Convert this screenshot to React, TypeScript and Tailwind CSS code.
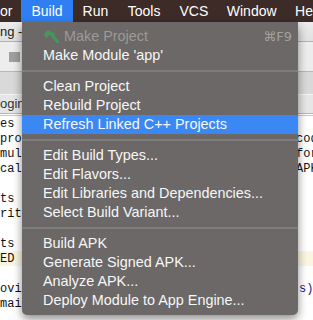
import React from "react";

const sans = { fontFamily: '"Liberation Sans", Arial, sans-serif' };
const mono = { fontFamily: '"Liberation Mono", "DejaVu Sans Mono", monospace' };

type Row = { l: string; r?: string; rs?: number; hl?: boolean };

const rows: Row[] = [
  { l: "es a" },
  { l: "prov", r: "cod" },
  { l: "mult", r: "for" },
  { l: "cal", r: "APK" },
  { l: "" },
  { l: "ts f" },
  { l: "rity" },
  { l: "" },
  { l: "ts f" },
  { l: "ED", hl: true },
  { l: "" },
  { l: "ovid", r: "s)", rs: 1 },
  { l: "main" },
  { l: "" },
];

function Hammer() {
  return (
    <svg width="16" height="14" viewBox="0 0 16 14" className="shrink-0">
      <path d="M0.5 5.5 L4.5 1 L12 4.5 L10.5 7.5 L6.5 5.8 L3.5 9 Z" fill="#45975a" />
      <path d="M9.2 6.2 L14.8 13" stroke="#45975a" strokeWidth="3" strokeLinecap="round" />
    </svg>
  );
}

function Item({ label, hl, disabled, icon, shortcut }: { label: string; hl?: boolean; disabled?: boolean; icon?: boolean; shortcut?: string }) {
  return (
    <div
      className={`flex h-[19px] items-center pl-[21px] pr-[6px] ${hl ? "bg-[#3b88f4]" : ""} ${disabled ? "text-[#9c9a98]" : "text-[#f7f7f7]"}`}
    >
      {icon && (
        <span className="mr-[5px] -mt-[1px]">
          <Hammer />
        </span>
      )}
      <span className="whitespace-pre">{label}</span>
      {shortcut && (
        <span className="ml-auto text-[13px] text-[#a3a19f]" style={{ fontFamily: '"DejaVu Sans", "Liberation Sans", sans-serif' }}>
          {shortcut}
        </span>
      )}
    </div>
  );
}

function Sep() {
  return (
    <div className="flex h-[12px] items-center">
      <div className="h-[2px] w-full bg-[#7f7d7b]" />
    </div>
  );
}

export default function App() {
  return (
    <div className="relative h-[320px] w-[313px] overflow-hidden bg-white" style={sans}>
      {/* menu bar */}
      <div className="flex h-[22px] items-center bg-[#3d2b28] text-[14px] text-white">
        <span className="pr-[9px]">or</span>
        <span className="flex h-[22px] items-center bg-[#2f7ff2] px-[10px]">Build</span>
        <span className="px-[10px]">Run</span>
        <span className="px-[9.5px]">Tools</span>
        <span className="px-[9.5px]">VCS</span>
        <span className="px-[9px]">Window</span>
        <span className="px-[9.5px]">Help</span>
      </div>
      {/* IDE background */}
      <div className="flex h-[20px] items-center border-b border-[#b3b3b3] bg-gradient-to-b from-[#ececec] to-[#e0e0e0] text-[13px] text-[#222]">
        <span className="whitespace-pre">ng -</span>
      </div>
      <div className="flex h-[30px] items-center border-b border-[#b8b8b8] bg-[#ededed] pl-[9px]">
        <div className="h-[10px] w-[11px] bg-[#9f9f9f]" />
      </div>
      <div className="h-[23px] border-b border-[#f4f4f4] bg-[#d9d9d9]" />
      <div className="flex h-[19px] items-center border-b border-[#b4b4b4] bg-[#e6e6e6] text-[13px] text-[#333]">
        <span>ogin</span>
      </div>
      <div className="h-[1px] bg-white" />
      <div className="h-[1px] bg-[#c9c9c9]" />
      <div className="text-[12px] text-[#111]" style={mono}>
        {rows.map((r, i) => (
          <div key={i} className={`flex h-[15px] items-center whitespace-pre ${r.hl ? "bg-[#fbf6e2]" : ""}`}>
            <span className="w-[296px] shrink-0">{r.l}</span>
            {r.r && <span className={r.rs ? "ml-[3px] text-[#1a1a8c]" : ""}>{r.r}</span>}
          </div>
        ))}
      </div>

      {/* dropdown menu overlay */}
      <div className="absolute left-[22px] top-[22px] h-[293px] w-[276px] rounded-b-[5px] bg-[#6b6867] pt-[5px] text-[14.4px] shadow-[0_4px_10px_rgba(0,0,0,0.45)]">
        <Item label="Make Project" disabled icon shortcut="⌘F9" />
        <Item label="Make Module 'app'" />
        <Sep />
        <Item label="Clean Project" />
        <Item label="Rebuild Project" />
        <Item label="Refresh Linked C++ Projects" hl />
        <Sep />
        <Item label="Edit Build Types..." />
        <Item label="Edit Flavors..." />
        <Item label="Edit Libraries and Dependencies..." />
        <Item label="Select Build Variant..." />
        <Sep />
        <Item label="Build APK" />
        <Item label="Generate Signed APK..." />
        <Item label="Analyze APK..." />
        <Item label="Deploy Module to App Engine..." />
      </div>
    </div>
  );
}
